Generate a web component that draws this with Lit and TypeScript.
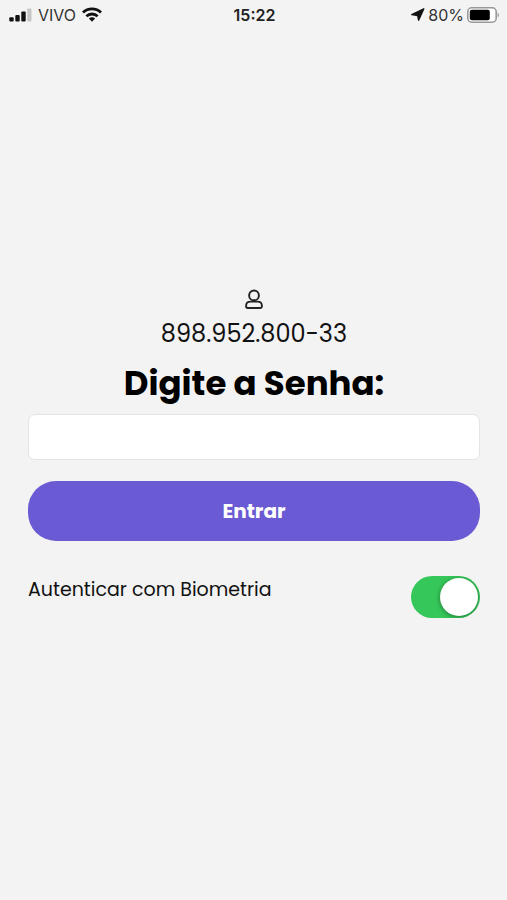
import { LitElement, html, css } from "lit";
import { customElement, state } from "lit/decorators.js";

@customElement("status-bar")
class StatusBar extends LitElement {
  static styles = css`
    :host {
      display: grid;
      grid-template-columns: 1fr auto 1fr;
      align-items: center;
      height: 29px;
      padding: 0 7px 0 9px;
      font-family: Inter, "Liberation Sans", sans-serif;
      font-size: 16px;
      line-height: 20px;
      color: #333;
    }
    .side {
      display: flex;
      align-items: center;
      gap: 6px;
    }
    .end {
      justify-content: flex-end;
      gap: 3px;
    }
    .time {
      font-weight: 600;
      color: #222;
    }
    svg {
      display: block;
      flex: none;
    }
  `;

  render() {
    return html`
      <div class="side">
        <svg width="23" height="14" viewBox="0 0 23 14" aria-hidden="true">
          <rect x="0.3" y="9.2" width="4.4" height="4.3" rx="1" fill="#111" />
          <rect x="6.3" y="7" width="4.4" height="6.5" rx="1" fill="#111" />
          <rect x="12.3" y="3.5" width="4.4" height="10" rx="1" fill="#111" />
          <rect x="18.3" y="0.5" width="4.2" height="13" rx="1" fill="#c6c6c6" />
        </svg>
        <span>VIVO</span>
        <svg width="20" height="15" viewBox="0 0 20 15" aria-hidden="true">
          <g fill="none" stroke="#111" stroke-width="2.9">
            <path d="M1 5.5C6 .6 14 .6 19 5.5" />
            <path d="M4.4 9.2c3.2-3 8-3 11.2 0" />
          </g>
          <path d="M6.9 11.5c1.7-1.6 4.5-1.6 6.2 0L10 14.8z" fill="#111" />
        </svg>
      </div>
      <span class="time">15:22</span>
      <div class="side end">
        <svg width="14" height="13" viewBox="0 0 14 13" aria-hidden="true">
          <path d="M12.8.8 7.6 12.2 6.7 7.5.8 6.6z" fill="#111" stroke="#111" stroke-width="1.4" stroke-linejoin="round" />
        </svg>
        <span>80%</span>
        <svg width="33" height="16" viewBox="0 0 33 16" aria-hidden="true">
          <rect x=".8" y=".8" width="28.4" height="14.4" rx="4" fill="#fff" stroke="#999" stroke-width="1.6" />
          <rect x="2.8" y="2.8" width="20" height="10.4" rx="2" fill="#000" />
          <path d="M30.7 5.7c1.7.7 1.7 3.9 0 4.6z" fill="#999" />
        </svg>
      </div>
    `;
  }
}

@customElement("app-root")
class AppRoot extends LitElement {
  static styles = css`
    :host {
      display: flex;
      flex-direction: column;
      min-height: 100vh;
      background: #f3f3f3;
      color: #111;
      font-family: Poppins, Inter, sans-serif;
    }
    main {
      flex: 1;
      display: flex;
      flex-direction: column;
      justify-content: center;
      padding: 0 27px 22px 28px;
    }
    .user {
      display: flex;
      flex-direction: column;
      align-items: center;
      gap: 9px;
      margin: 0;
      font-size: 24px;
      line-height: 32px;
    }
    svg {
      display: block;
    }
    .title {
      margin: 12px 0 10px;
      text-align: center;
      font-size: 34px;
      line-height: 42px;
      font-weight: 700;
      color: #000;
    }
    .title label {
      display: block;
    }
    .field {
      box-sizing: border-box;
      width: 100%;
      height: 46px;
      margin: 0;
      padding: 0 12px;
      border: 1px solid #e4e4e4;
      border-radius: 7px;
      background: #fff;
      font: inherit;
      font-size: 20px;
      outline: none;
    }
    .submit {
      width: 100%;
      height: 60px;
      margin: 21px 0 35px;
      padding: 0;
      border: 0;
      border-radius: 28px;
      background: #6a5ad3;
      color: #fff;
      font: inherit;
      font-size: 20px;
      font-weight: 700;
      cursor: pointer;
    }
    .option {
      display: flex;
      justify-content: space-between;
      align-items: flex-start;
      font-size: 19px;
      line-height: 28px;
    }
    .switch {
      appearance: none;
      flex: none;
      display: flex;
      box-sizing: border-box;
      width: 69px;
      height: 42px;
      margin: 0;
      padding: 2px;
      border-radius: 21px;
      background: #d5d5d8;
      overflow: hidden;
      cursor: pointer;
    }
    .switch::before {
      content: "";
      width: 38px;
      height: 38px;
      border-radius: 50%;
      background: #fff;
      box-shadow: 0 1px 5px rgba(0, 0, 0, 0.4);
    }
    .switch:checked {
      justify-content: flex-end;
      background: #35c759;
    }
  `;

  @state() private biometrics = true;

  private toggle(e: Event) {
    this.biometrics = (e.target as HTMLInputElement).checked;
  }

  render() {
    return html`
      <status-bar></status-bar>
      <main>
        <p class="user">
          <svg width="18" height="20" viewBox="0 0 18 20" fill="none" stroke="#222" stroke-width="1.9" aria-hidden="true">
            <circle cx="9" cy="6.4" r="4.9" />
            <path d="M5.4 12.6h7.2c2.6 0 4.3 1.8 4.3 4.2v.8c0 .9-.6 1.4-1.5 1.4H2.6c-.9 0-1.5-.5-1.5-1.4v-.8c0-2.4 1.7-4.2 4.3-4.2z" />
          </svg>
          <span>898.952.800-33</span>
        </p>
        <h1 class="title"><label for="password">Digite a Senha:</label></h1>
        <input class="field" id="password" type="password" />
        <button class="submit" type="button">Entrar</button>
        <div class="option">
          <label for="biometrics">Autenticar com Biometria</label>
          <input
            class="switch"
            id="biometrics"
            type="checkbox"
            role="switch"
            .checked=${this.biometrics}
            @change=${this.toggle}
          />
        </div>
      </main>
    `;
  }
}
